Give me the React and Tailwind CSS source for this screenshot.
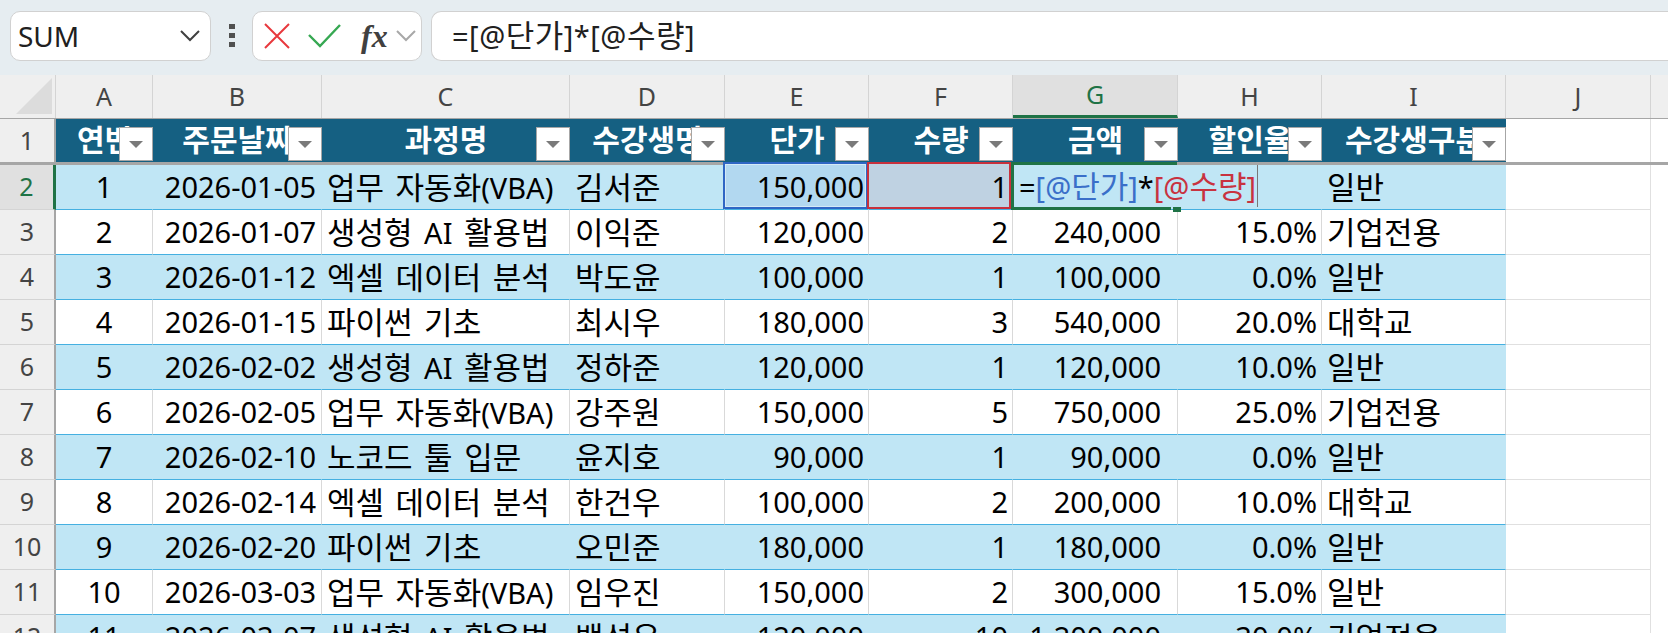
const cols = [
  { id: 'A', w: 97 }, { id: 'B', w: 169 }, { id: 'C', w: 248 }, { id: 'D', w: 155 }, { id: 'E', w: 144 },
  { id: 'F', w: 144 }, { id: 'G', w: 165 }, { id: 'H', w: 144 }, { id: 'I', w: 184 }, { id: 'J', w: 145 },
];
const heads = ['연번', '주문날짜', '과정명', '수강생명', '단가', '수량', '금액', '할인율', '수강생구분'];
const rows = [
  ['1', '2026-01-05', '업무 자동화(VBA)', '김서준', '150,000', '1', '', '', '일반'],
  ['2', '2026-01-07', '생성형 AI 활용법', '이익준', '120,000', '2', '240,000', '15.0%', '기업전용'],
  ['3', '2026-01-12', '엑셀 데이터 분석', '박도윤', '100,000', '1', '100,000', '0.0%', '일반'],
  ['4', '2026-01-15', '파이썬 기초', '최시우', '180,000', '3', '540,000', '20.0%', '대학교'],
  ['5', '2026-02-02', '생성형 AI 활용법', '정하준', '120,000', '1', '120,000', '10.0%', '일반'],
  ['6', '2026-02-05', '업무 자동화(VBA)', '강주원', '150,000', '5', '750,000', '25.0%', '기업전용'],
  ['7', '2026-02-10', '노코드 툴 입문', '윤지호', '90,000', '1', '90,000', '0.0%', '일반'],
  ['8', '2026-02-14', '엑셀 데이터 분석', '한건우', '100,000', '2', '200,000', '10.0%', '대학교'],
  ['9', '2026-02-20', '파이썬 기초', '오민준', '180,000', '1', '180,000', '0.0%', '일반'],
  ['10', '2026-03-03', '업무 자동화(VBA)', '임우진', '150,000', '2', '300,000', '15.0%', '일반'],
  ['11', '2026-03-07', '생성형 AI 활용법', '백석우', '120,000', '10', '1,200,000', '30.0%', '기업전용'],
];
const cellPad = [
  'justify-center', 'justify-center pl-[10px] pr-[3px]', 'justify-start pl-[5px] [word-spacing:4px]', 'justify-start pl-[5px]',
  'justify-end pr-[4px]', 'justify-end pr-[4px]', 'justify-end pr-[16px]', 'justify-end pr-[4px]', 'justify-start pl-[5px]',
];

// Korean glyphs run larger than the Latin ones in the original font
function Ko({ t }) {
  return (
    <span>
      {t.split(/([가-힣]+)/).map((part, i) =>
        i % 2 ? <span key={i} className="text-[31px]">{part}</span> : part
      )}
    </span>
  );
}

function Caret() {
  return <span className="absolute right-0 bottom-[1px] w-[34px] h-[34px] bg-white border border-[#a6a6a6] flex items-center justify-center"><span className="w-0 h-0 border-x-[7px] border-x-transparent border-t-[7px] border-t-[#7a7a7a]" /></span>;
}

function FormulaBar() {
  return (
    <div className="h-[74px] bg-[#e6edf1] flex items-center pl-[10px] pb-[3px]">
      <div className="w-[201px] h-[50px] bg-white border border-[#d1d1d1] rounded-[10px] flex items-center justify-between pl-[7px] pr-[9px] text-[28px] text-[#202020]">
        <span>SUM</span>
        <svg width="22" height="14" viewBox="0 0 22 14" fill="none" stroke="#404040" strokeWidth="2"><path d="M2 2l9 9 9-9" /></svg>
      </div>
      <div className="w-[6px] ml-[18px] flex flex-col gap-[4px]">
        <span className="h-[5px] bg-[#505050]" /><span className="h-[5px] bg-[#505050]" /><span className="h-[5px] bg-[#505050]" />
      </div>
      <div className="ml-[17px] w-[170px] h-[50px] bg-white border border-[#d1d1d1] rounded-[10px] flex items-center pl-[11px] shrink-0">
        <svg width="26" height="26" viewBox="0 0 26 26" fill="none" stroke="#e8383d" strokeWidth="2"><path d="M1 1l24 24M25 1L1 25" /></svg>
        <svg className="ml-[18px]" width="33" height="24" viewBox="0 0 33 24" fill="none" stroke="#36a852" strokeWidth="2.4"><path d="M1 11l11 11L32 1" /></svg>
        <span className="ml-[20px] w-[28px] text-[32px] leading-none italic font-bold text-[#404040]" style={{ fontFamily: '"Liberation Serif", serif' }}>fx</span>
        <svg className="ml-[7px]" width="20" height="12" viewBox="0 0 20 12" fill="none" stroke="#a8a8a8" strokeWidth="2"><path d="M1 1l9 9 9-9" /></svg>
      </div>
      <div className="ml-[9px] flex-1 h-[50px] bg-white border border-[#d1d1d1] border-r-0 rounded-l-[10px] flex items-center pl-[20px] text-[29px] text-[#202020] tracking-[0.5px]"><Ko t="=[@단가]*[@수량]" /></div>
    </div>
  );
}

function SelectionOverlays({ col }) {
  if (col === 4) {
    return <span className="absolute left-[-2px] top-[-3px] right-0 bottom-0 border-2 border-[#2f66c4] bg-[#b2d8f0] outline outline-1 -outline-offset-3 outline-[#d4e9f6]" />;
  }
  if (col === 5) {
    return <span className="absolute left-[-2px] top-[-3px] right-[1px] bottom-0 border-2 border-[#c8303c] bg-[#bfd2e2]" />;
  }
  if (col === 6) {
    return (
      <>
        <span className="absolute left-[-2px] top-[-3px] right-0 h-[3px] bg-[#1f7346] z-10" />
        <span className="absolute left-[-2px] top-[-3px] bottom-0 w-[3px] bg-[#1f7346] z-10" />
        <span className="absolute left-[-2px] right-[6px] bottom-[-1px] h-[3px] bg-[#1f7346] z-10" />
        <span className="absolute right-[-4px] bottom-[-3px] w-[8px] h-[5px] bg-[#1f7346] z-10" />
        <span className="absolute left-[1px] top-0 bottom-[2px] w-[244px] bg-[#c0e6f5] border-r border-[#777] flex items-center pl-[5px] text-[29px] whitespace-nowrap z-[5]">
          <span>=<span className="text-[#3a6fc9]">[@<span className="text-[31px]">단가</span>]</span>*<span className="text-[#c8323f]">[@<span className="text-[31px]">수량</span>]</span></span>
        </span>
      </>
    );
  }
  return null;
}

export default function App() {
  return (
    <div className="w-[1668px] h-[633px] overflow-hidden bg-white text-black" style={{ fontFamily: '"Noto Sans", "Noto Sans CJK KR", sans-serif' }}>
      <FormulaBar />
      {/* column letters */}
      <div className="flex h-[44px] bg-[#efefef] border-t border-[#e6edf1]">
        <div className="w-[56px] shrink-0 border-r border-[#d4d4d4] relative">
          <span className="absolute right-[3px] bottom-[4px] w-0 h-0 border-l-[36px] border-l-transparent border-b-[36px] border-b-[#dcdcdc]" />
        </div>
        {cols.map((c) => (
          <div key={c.id} style={{ width: c.w }} className={`shrink-0 flex items-center justify-center text-[25px] border-r border-[#d4d4d4] ${c.id === 'G' ? 'bg-[#e0e0e0] text-[#1f7346] border-b-[3px] border-b-[#1f7346]' : 'text-[#444]'}`}>{c.id}</div>
        ))}
      </div>
      {/* header row */}
      <div className="flex h-[47px] border-t border-[#a6a6a6] border-b-[3px] border-b-[#a6a6a6]">
        <div className="w-[56px] shrink-0 bg-[#efefef] border-r-2 border-[#a6a6a6] flex items-center justify-center text-[25px] text-[#444]">1</div>
        {heads.map((h, i) => (
          <div key={h} style={{ width: cols[i].w }} className="shrink-0 bg-[#156082] relative flex items-center justify-center overflow-hidden text-white font-bold text-[30px] whitespace-nowrap">
            <span className="pb-[3px]">{h}</span>
            <Caret />
          </div>
        ))}
        <div style={{ width: cols[9].w }} className="shrink-0 border-r border-[#e0e0e0]" />
      </div>
      {/* data rows */}
      {rows.map((r, ri) => (
        <div key={r[0]} className="flex h-[45px] shrink-0">
          <div className={`w-[56px] shrink-0 flex items-center justify-center text-[25px] border-b border-[#d4d4d4] ${ri === 0 ? 'bg-[#e0e0e0] text-[#1f7346] border-r-[3px] border-r-[#1f7346]' : 'bg-[#efefef] text-[#444] border-r-2 border-r-[#a6a6a6]'}`}>{ri + 2}</div>
          {r.map((v, i) => (
            <div key={i} style={{ width: cols[i].w }} className={`relative shrink-0 flex items-center text-[29px] whitespace-nowrap border-b border-b-[#45b0e1] ${i === 8 ? 'border-r border-r-[#45b0e1]' : 'border-r'} ${ri % 2 === 0 ? 'bg-[#c0e6f5] border-r-[#c0e6f5]' : 'bg-white border-r-[#d9d9d9]'} ${cellPad[i]}`}>
              {ri === 0 && <SelectionOverlays col={i} />}
              <span className="relative"><Ko t={v} /></span>
            </div>
          ))}
          <div style={{ width: cols[9].w }} className="shrink-0 border-r border-b border-[#e0e0e0]" />
        </div>
      ))}
    </div>
  );
}
